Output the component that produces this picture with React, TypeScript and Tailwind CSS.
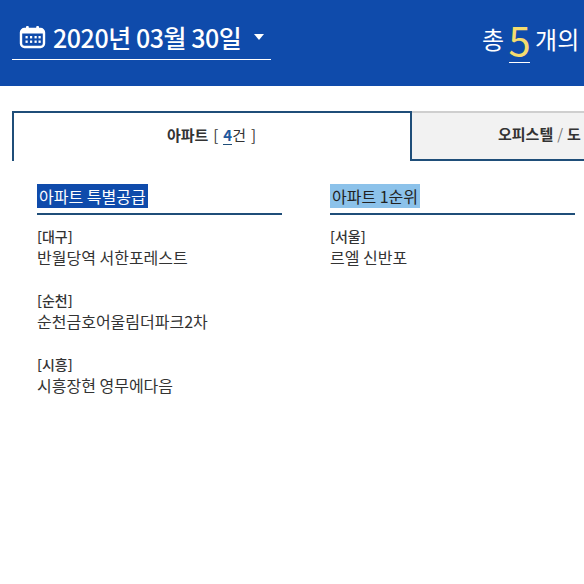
import React from "react";

const font = { fontFamily: '"Noto Sans CJK KR", "Noto Sans", sans-serif' };

function Item({ region, name }: { region: string; name: string }) {
  return (
    <div className="mb-[22px]">
      <div className="text-[14px] font-medium leading-[20px] text-[#333]">{region}</div>
      <div className="text-[16px] leading-[22px] text-[#333]">{name}</div>
    </div>
  );
}

function Column({ title, cls, items }: { title: string; cls: string; items: [string, string][] }) {
  return (
    <div className="w-[245px] shrink-0">
      <div className="h-[31px] border-b-2 border-[#1f4e79]">
        <span className={`inline-block h-[24px] px-[2px] text-[16px] leading-[24px] ${cls}`}>{title}</span>
      </div>
      <div className="pt-[11px]">
        {items.map(([r, n]) => (
          <Item key={r} region={r} name={n} />
        ))}
      </div>
    </div>
  );
}

export default function App() {
  return (
    <div className="h-[584px] w-[584px] overflow-hidden bg-white" style={font}>
      <header className="flex h-[86px] items-start justify-between bg-[#0f4bab] pl-[12px] text-white">
        <div className="mt-[15px] flex h-[45px] w-[259px] items-center border-b border-white pl-[7px]">
          <svg width="27" height="24" viewBox="0 0 26 24" fill="none" className="shrink-0">
            <rect x="1.5" y="4" width="23" height="18" rx="3.5" stroke="white" strokeWidth="2.4" />
            <rect x="6.5" y="1" width="2.8" height="5" rx="1" fill="white" />
            <rect x="16.7" y="1" width="2.8" height="5" rx="1" fill="white" />
            <rect x="2" y="5" width="22" height="3.5" fill="white" />
            {[6, 10.5, 15, 19].map((x) => (
              <React.Fragment key={x}>
                <rect x={x} y="11" width="2.2" height="2.4" fill="white" />
                <rect x={x} y="15.5" width="2.2" height="2.4" fill="white" />
              </React.Fragment>
            ))}
          </svg>
          <span className="ml-[7px] whitespace-nowrap text-[25px] font-medium leading-[32px] tracking-[-0.45px]">2020년 03월 30일</span>
          <span className="ml-[13px] h-0 w-0 border-x-[5.5px] border-t-[6px] border-x-transparent border-t-white" />
        </div>
        <div className="mt-[15px] flex h-[48px] w-[102px] shrink-0 items-center whitespace-nowrap text-[24px] leading-none">
          <span>총</span>
          <span className="mx-[5px] flex h-[48px] w-[21px] shrink-0 items-center justify-center border-b border-white text-[40px] leading-none text-[#f5dc6e]">5</span>
          <span>개의</span>
        </div>
      </header>

      <nav className="mt-[25px] flex pl-[12px]">
        <div className="flex h-[50px] w-[400px] shrink-0 items-center justify-center border-x-2 border-t-2 border-[#1f4e79] bg-white pb-[3px] pr-[1px] text-[15px] text-[#333]">
          <b className="font-bold">아파트</b>
          <span className="ml-[5px]">[</span>
          <b className="ml-[5px] border-b border-[#1f4e79] font-bold leading-[18px] text-[#1f5a9e]">4</b>
          <span>건</span>
          <span className="ml-[5px]">]</span>
        </div>
        <div className="flex h-[50px] w-[172px] shrink-0 items-center overflow-hidden whitespace-nowrap border-t-2 border-b-2 border-t-[#cfcfcf] border-b-[#1f4e79] bg-[#f2f2f2] pb-[3px] pl-[86px] text-[15px] text-[#333]">
          <b className="font-bold">오피스텔</b>
          <span className="mx-[4px] text-[#777]">/</span>
          <b className="font-bold">도</b>
        </div>
      </nav>

      <main className="flex gap-[48px] pl-[37px] pt-[23px]">
        <Column
          title="아파트 특별공급"
          cls="bg-[#0f4bab] text-white"
          items={[
            ["[대구]", "반월당역 서한포레스트"],
            ["[순천]", "순천금호어울림더파크2차"],
            ["[시흥]", "시흥장현 영무에다음"],
          ]}
        />
        <Column title="아파트 1순위" cls="bg-[#8cc2ea] text-[#222]" items={[["[서울]", "르엘 신반포"]]} />
      </main>
    </div>
  );
}
